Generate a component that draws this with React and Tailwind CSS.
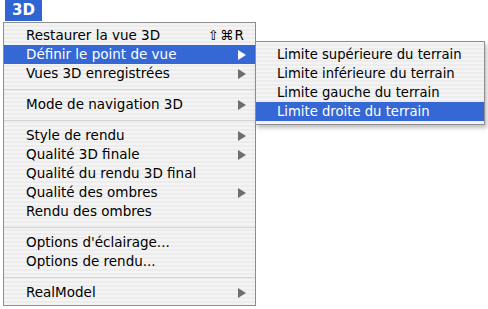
import React from 'react'

const items = [
  { label: 'Restaurer la vue 3D', shortcut: '⇧⌘R' },
  { label: 'Définir le point de vue', arrow: true, active: true },
  { label: 'Vues 3D enregistrées', arrow: true },
  { sep: true },
  { label: 'Mode de navigation 3D', arrow: true },
  { sep: true },
  { label: 'Style de rendu', arrow: true },
  { label: 'Qualité 3D finale', arrow: true },
  { label: 'Qualité du rendu 3D final' },
  { label: 'Qualité des ombres', arrow: true },
  { label: 'Rendu des ombres' },
  { sep: true },
  { label: "Options d'éclairage..." },
  { label: 'Options de rendu...' },
  { sep: true },
  { label: 'RealModel', arrow: true },
]

const sub = [
  { label: 'Limite supérieure du terrain' },
  { label: 'Limite inférieure du terrain' },
  { label: 'Limite gauche du terrain' },
  { label: 'Limite droite du terrain', active: true },
]

const stripes = 'bg-[repeating-linear-gradient(to_bottom,#f4f4f4_0px,#f4f4f4_2px,#ececec_2px,#ececec_4px)]'

function Arrow({ active }) {
  return (
    <svg width="8" height="10" viewBox="0 0 8 10">
      <path d="M0 0 L8 5 L0 10 Z" fill={active ? '#ffffff' : '#6e6e6e'} />
    </svg>
  )
}

function Row({ item }) {
  if (item.sep) {
    return (
      <div className="flex h-[12px] items-center">
        <div className="h-px w-full bg-[#d4d4d4]" />
      </div>
    )
  }
  return (
    <div className={`flex h-[19px] items-center justify-between pl-[22px] pr-[9px] ${item.active ? 'bg-[#3568d4] text-white' : 'text-black'}`}>
      <span>{item.label}</span>
      {item.shortcut && <span className="pr-[1px] tracking-[1px]">{item.shortcut}</span>}
      {item.arrow && <Arrow active={item.active} />}
    </div>
  )
}

export default function App() {
  return (
    <div className="relative h-[309px] w-[488px] overflow-hidden bg-white text-[13.5px] font-['DejaVu_Sans',sans-serif]">
      <div className="ml-[5px] flex h-[21px] w-[37px] items-center justify-center bg-[#2f64d2] text-[15px] font-bold text-white">3D</div>
      <div className={`ml-[3px] mt-[1px] w-[253px] border border-[#8e8e8e] pb-[3px] pt-[3px] ${stripes}`}>
        {items.map((it, i) => <Row key={i} item={it} />)}
      </div>
      <div className={`absolute left-[255px] top-[41px] w-[230px] border border-[#8e8e8e] py-[3px] text-[13.2px] shadow-[2px_3px_4px_rgba(0,0,0,0.25)] ${stripes}`}>
        {sub.map((it, i) => (
          <div key={i} className={`flex h-[19px] items-center pl-[21px] ${it.active ? 'bg-[#3568d4] text-white' : 'text-black'}`}>{it.label}</div>
        ))}
      </div>
    </div>
  )
}
